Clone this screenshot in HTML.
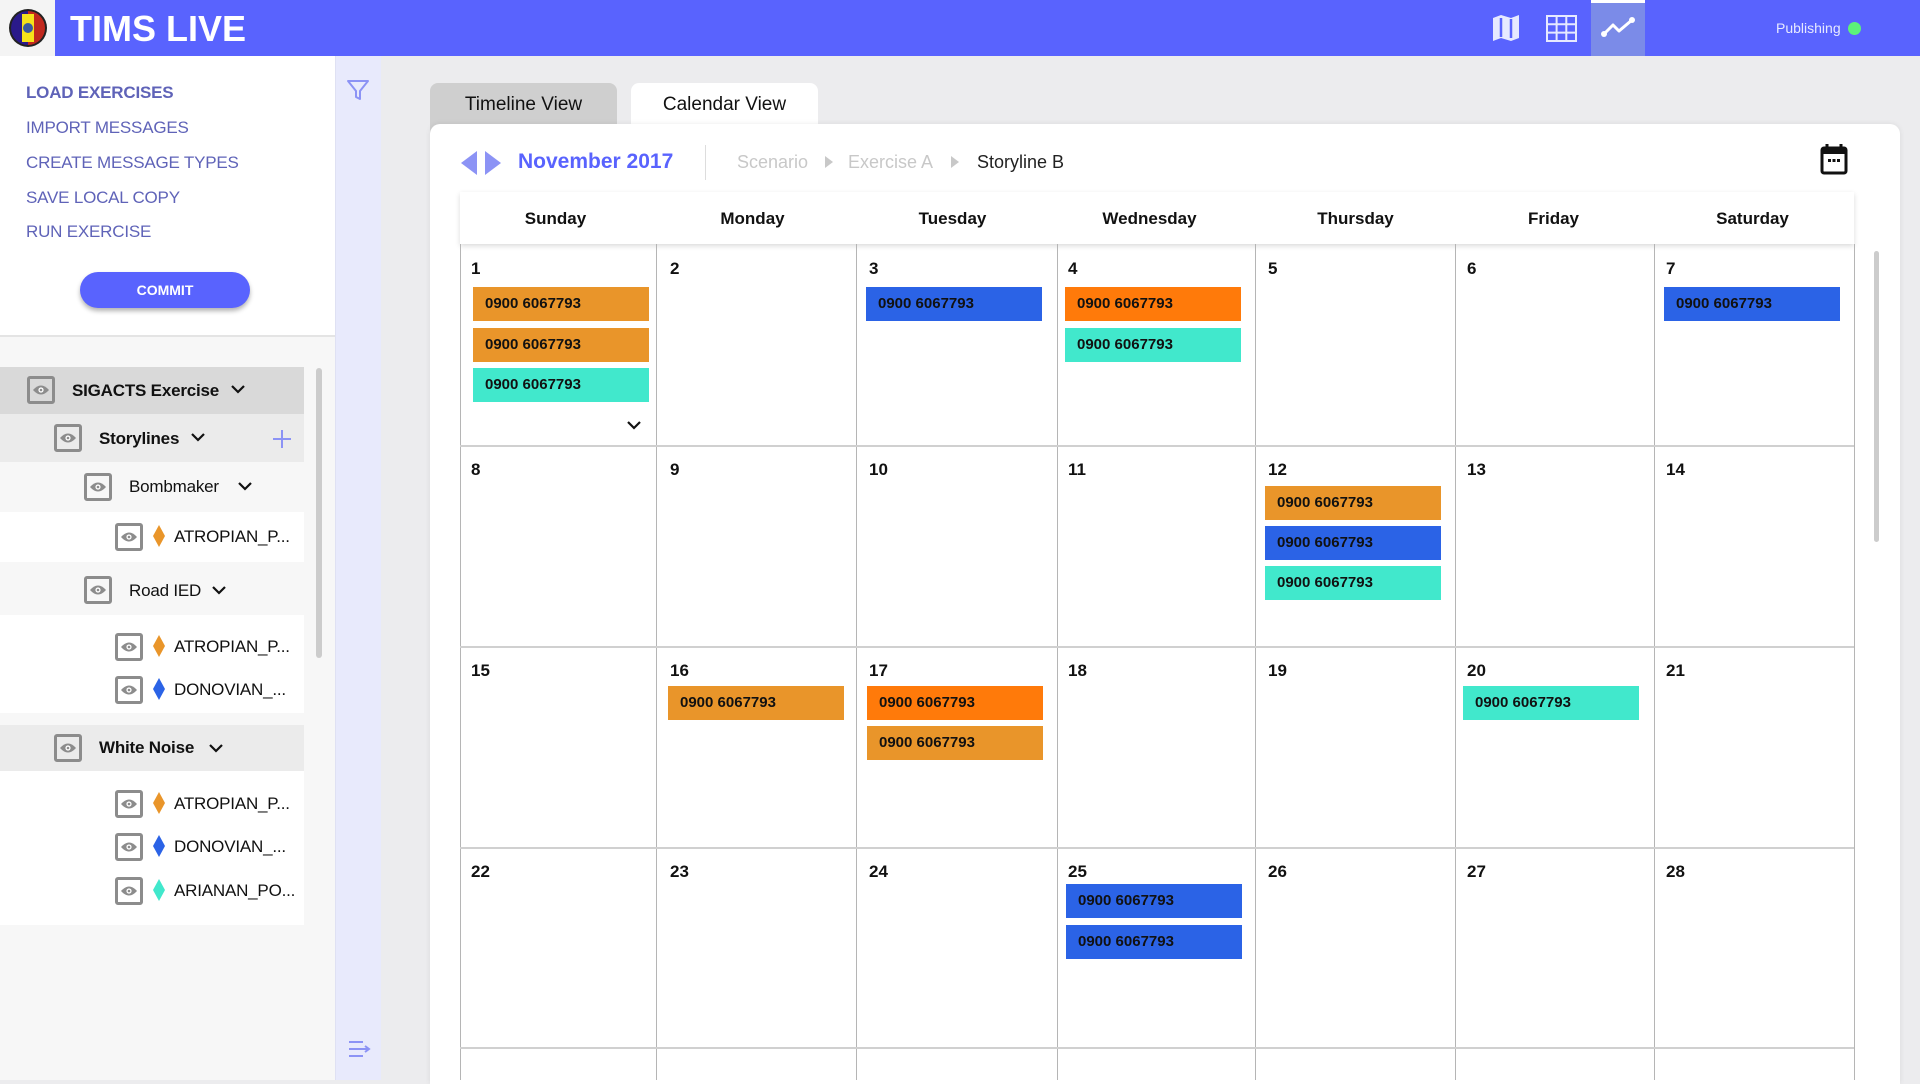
<!DOCTYPE html>
<html><head><meta charset="utf-8"><style>
*{margin:0;padding:0;box-sizing:border-box}
body{width:1920px;height:1080px;overflow:hidden;background:#ececee;font-family:"Liberation Sans",sans-serif;position:relative}
.a{position:absolute}
.hdr{left:0;top:0;width:1920px;height:56px;background:#5963fe}
.menu{left:26px;font-size:17px;color:#5f63b8;line-height:22px;letter-spacing:-0.2px}
.row{left:0;width:304px}
.eye{position:absolute;width:28px;height:28px;border:3px solid #8c8c8c;border-radius:3px}
.eye svg{position:absolute;left:2px;top:5px}
.lbl{position:absolute;font-size:17px;color:#111;line-height:22px;letter-spacing:-0.2px}
.dia{position:absolute;width:12px;height:22px}
.day{font-size:17px;font-weight:bold;line-height:22px;color:#111}
.dn{font-size:17px;font-weight:bold;color:#111;text-align:center;width:199px;top:208px;line-height:22px}
.ev{width:176px;height:34px;font-size:15px;font-weight:bold;color:#111;line-height:34px;padding-left:12px}
.o{background:#e9952a}.b{background:#2b63e6}.t{background:#41e8cc}.r{background:#ff7a0a}
.vl{width:1px;background:#b5b5b5;top:244px;height:836px}
.hl{height:2px;background:#d0d0d0;left:460px;width:1394px}
</style></head><body>
<div class="a hdr"></div>
<div class="a" style="left:0;top:0;width:55px;height:56px;background:#f4f4f4"></div>
<svg class="a" style="left:8px;top:8px" width="40" height="40" viewBox="0 0 40 40"><circle cx="20" cy="20" r="19" fill="#222"/><path d="M20 3 A17 17 0 0 0 20 37Z" fill="#2a1a8a"/><path d="M20 3 A17 17 0 0 1 20 37Z" fill="#c0281e"/><rect x="14" y="6" width="12" height="28" fill="#f5e21a"/><circle cx="20" cy="20" r="5" fill="#3a5aa0"/></svg>
<div class="a" style="left:70px;top:7px;font-size:36px;font-weight:bold;color:#fff;line-height:44px">TIMS LIVE</div>
<svg class="a" style="left:1492px;top:14px" width="28" height="28" viewBox="0 0 28 28"><path d="M1 4 L9 1 L19 4 L27 1 L27 24 L19 27 L9 24 L1 27Z" fill="#e6e9ff"/><path d="M9 4 L9 23 M19 5 L19 24" stroke="#5963fe" stroke-width="2.5"/></svg>
<svg class="a" style="left:1546px;top:15px" width="31" height="27" viewBox="0 0 31 27"><rect x="1" y="1" width="29" height="25" fill="none" stroke="#e6e9ff" stroke-width="2"/><path d="M1 9.3H30M1 17.6H30M10.6 1V26M20.3 1V26" stroke="#e6e9ff" stroke-width="2"/></svg>
<div class="a" style="left:1591px;top:0;width:54px;height:56px;background:#7b8be8;border-top:3px solid #fff"></div>
<svg class="a" style="left:1601px;top:16px" width="34" height="22" viewBox="0 0 34 22"><path d="M3 18 L12 9 L18 15 L31 4" fill="none" stroke="#fff" stroke-width="3" stroke-linecap="round" stroke-linejoin="round"/><circle cx="3" cy="18" r="3" fill="#fff"/><circle cx="31" cy="4" r="3" fill="#fff"/></svg>
<div class="a" style="left:1776px;top:20px;font-size:14px;color:#e6e9ff">Publishing</div>
<div class="a" style="left:1848px;top:22px;width:13px;height:13px;border-radius:50%;background:#5cf27a"></div>

<!-- sidebar -->
<div class="a" style="left:0;top:56px;width:335px;height:1024px;background:#f7f7f7"></div>
<div class="a" style="left:0;top:56px;width:335px;height:281px;background:#fff;border-bottom:2px solid #e4e4e4"></div>
<div class="a" style="left:335px;top:56px;width:46px;height:1024px;background:#e8eafc;border-left:1px solid #dfe1f3"></div>
<svg class="a" style="left:346px;top:78px" width="24" height="24" viewBox="0 0 24 24"><path d="M2 3 H22 L14 13 V21 L10 19 V13Z" fill="none" stroke="#8c93f5" stroke-width="2" stroke-linejoin="round"/></svg>
<svg class="a" style="left:348px;top:1040px" width="24" height="18" viewBox="0 0 24 18"><path d="M1 2H15M1 9H20M1 16H15" stroke="#8c93f5" stroke-width="2"/><path d="M17 6 L21 9 L17 12" fill="none" stroke="#8c93f5" stroke-width="2"/></svg>
<div class="a menu" style="top:82px;font-weight:bold">LOAD EXERCISES</div>
<div class="a menu" style="top:117px">IMPORT MESSAGES</div>
<div class="a menu" style="top:152px">CREATE MESSAGE TYPES</div>
<div class="a menu" style="top:187px">SAVE LOCAL COPY</div>
<div class="a menu" style="top:221px">RUN EXERCISE</div>
<div class="a" style="left:80px;top:272px;width:170px;height:36px;border-radius:18px;background:#5963fe;box-shadow:0 3px 5px rgba(0,0,0,.3);color:#fff;font-weight:bold;font-size:14px;text-align:center;line-height:36px">COMMIT</div>

<div class="a row" style="top:367px;height:47px;background:#d9d9d9"></div>
<div class="a row" style="top:414px;height:48px;background:#ebebeb"></div>
<div class="a row" style="top:512px;height:50px;background:#fff"></div>
<div class="a row" style="top:615px;height:98px;background:#fff"></div>
<div class="a row" style="top:725px;height:46px;background:#ebebeb"></div>
<div class="a row" style="top:771px;height:154px;background:#fff"></div>
<div class="a" style="left:316px;top:368px;width:6px;height:290px;border-radius:3px;background:#ccc"></div>

<div class="eye" style="left:27px;top:376px"><svg width="18" height="12" viewBox="0 0 18 12"><path d="M1 6 Q9 -3 17 6 Q9 15 1 6Z" fill="#8c8c8c"/><circle cx="9" cy="6" r="2.6" fill="#fff"/><circle cx="9" cy="6" r="1.3" fill="#8c8c8c"/></svg></div>
<div class="lbl" style="left:72px;top:380px;font-weight:bold">SIGACTS Exercise</div>
<svg class="a" style="left:231px;top:384px" width="14" height="10"><path d="M1 2 L7 8 L13 2" fill="none" stroke="#111" stroke-width="2.2"/></svg>

<div class="eye" style="left:54px;top:424px"><svg width="18" height="12" viewBox="0 0 18 12"><path d="M1 6 Q9 -3 17 6 Q9 15 1 6Z" fill="#8c8c8c"/><circle cx="9" cy="6" r="2.6" fill="#fff"/><circle cx="9" cy="6" r="1.3" fill="#8c8c8c"/></svg></div>
<div class="lbl" style="left:99px;top:428px;font-weight:bold">Storylines</div>
<svg class="a" style="left:191px;top:432px" width="14" height="10"><path d="M1 2 L7 8 L13 2" fill="none" stroke="#111" stroke-width="2.2"/></svg>
<svg class="a" style="left:272px;top:429px" width="20" height="20"><path d="M10 1V19M1 10H19" stroke="#8c93f5" stroke-width="2"/></svg>

<div class="eye" style="left:84px;top:473px"><svg width="18" height="12" viewBox="0 0 18 12"><path d="M1 6 Q9 -3 17 6 Q9 15 1 6Z" fill="#8c8c8c"/><circle cx="9" cy="6" r="2.6" fill="#fff"/><circle cx="9" cy="6" r="1.3" fill="#8c8c8c"/></svg></div>
<div class="lbl" style="left:129px;top:476px">Bombmaker</div>
<svg class="a" style="left:238px;top:481px" width="14" height="10"><path d="M1 2 L7 8 L13 2" fill="none" stroke="#111" stroke-width="2.2"/></svg>

<div class="eye" style="left:115px;top:523px"><svg width="18" height="12" viewBox="0 0 18 12"><path d="M1 6 Q9 -3 17 6 Q9 15 1 6Z" fill="#8c8c8c"/><circle cx="9" cy="6" r="2.6" fill="#fff"/><circle cx="9" cy="6" r="1.3" fill="#8c8c8c"/></svg></div>
<svg class="dia" style="left:153px;top:525px" viewBox="0 0 12 22"><path d="M6 0 L12 11 L6 22 L0 11Z" fill="#e9952a"/></svg>
<div class="lbl" style="left:174px;top:526px">ATROPIAN_P...</div>

<div class="eye" style="left:84px;top:576px"><svg width="18" height="12" viewBox="0 0 18 12"><path d="M1 6 Q9 -3 17 6 Q9 15 1 6Z" fill="#8c8c8c"/><circle cx="9" cy="6" r="2.6" fill="#fff"/><circle cx="9" cy="6" r="1.3" fill="#8c8c8c"/></svg></div>
<div class="lbl" style="left:129px;top:580px">Road IED</div>
<svg class="a" style="left:212px;top:585px" width="14" height="10"><path d="M1 2 L7 8 L13 2" fill="none" stroke="#111" stroke-width="2.2"/></svg>

<div class="eye" style="left:115px;top:633px"><svg width="18" height="12" viewBox="0 0 18 12"><path d="M1 6 Q9 -3 17 6 Q9 15 1 6Z" fill="#8c8c8c"/><circle cx="9" cy="6" r="2.6" fill="#fff"/><circle cx="9" cy="6" r="1.3" fill="#8c8c8c"/></svg></div>
<svg class="dia" style="left:153px;top:635px" viewBox="0 0 12 22"><path d="M6 0 L12 11 L6 22 L0 11Z" fill="#e9952a"/></svg>
<div class="lbl" style="left:174px;top:636px">ATROPIAN_P...</div>
<div class="eye" style="left:115px;top:676px"><svg width="18" height="12" viewBox="0 0 18 12"><path d="M1 6 Q9 -3 17 6 Q9 15 1 6Z" fill="#8c8c8c"/><circle cx="9" cy="6" r="2.6" fill="#fff"/><circle cx="9" cy="6" r="1.3" fill="#8c8c8c"/></svg></div>
<svg class="dia" style="left:153px;top:678px" viewBox="0 0 12 22"><path d="M6 0 L12 11 L6 22 L0 11Z" fill="#2b63e6"/></svg>
<div class="lbl" style="left:174px;top:679px">DONOVIAN_...</div>

<div class="eye" style="left:54px;top:734px"><svg width="18" height="12" viewBox="0 0 18 12"><path d="M1 6 Q9 -3 17 6 Q9 15 1 6Z" fill="#8c8c8c"/><circle cx="9" cy="6" r="2.6" fill="#fff"/><circle cx="9" cy="6" r="1.3" fill="#8c8c8c"/></svg></div>
<div class="lbl" style="left:99px;top:737px;font-weight:bold">White Noise</div>
<svg class="a" style="left:209px;top:743px" width="14" height="10"><path d="M1 2 L7 8 L13 2" fill="none" stroke="#111" stroke-width="2.2"/></svg>

<div class="eye" style="left:115px;top:790px"><svg width="18" height="12" viewBox="0 0 18 12"><path d="M1 6 Q9 -3 17 6 Q9 15 1 6Z" fill="#8c8c8c"/><circle cx="9" cy="6" r="2.6" fill="#fff"/><circle cx="9" cy="6" r="1.3" fill="#8c8c8c"/></svg></div>
<svg class="dia" style="left:153px;top:792px" viewBox="0 0 12 22"><path d="M6 0 L12 11 L6 22 L0 11Z" fill="#e9952a"/></svg>
<div class="lbl" style="left:174px;top:793px">ATROPIAN_P...</div>
<div class="eye" style="left:115px;top:833px"><svg width="18" height="12" viewBox="0 0 18 12"><path d="M1 6 Q9 -3 17 6 Q9 15 1 6Z" fill="#8c8c8c"/><circle cx="9" cy="6" r="2.6" fill="#fff"/><circle cx="9" cy="6" r="1.3" fill="#8c8c8c"/></svg></div>
<svg class="dia" style="left:153px;top:835px" viewBox="0 0 12 22"><path d="M6 0 L12 11 L6 22 L0 11Z" fill="#2b63e6"/></svg>
<div class="lbl" style="left:174px;top:836px">DONOVIAN_...</div>
<div class="eye" style="left:115px;top:877px"><svg width="18" height="12" viewBox="0 0 18 12"><path d="M1 6 Q9 -3 17 6 Q9 15 1 6Z" fill="#8c8c8c"/><circle cx="9" cy="6" r="2.6" fill="#fff"/><circle cx="9" cy="6" r="1.3" fill="#8c8c8c"/></svg></div>
<svg class="dia" style="left:153px;top:879px" viewBox="0 0 12 22"><path d="M6 0 L12 11 L6 22 L0 11Z" fill="#41e8cc"/></svg>
<div class="lbl" style="left:174px;top:880px">ARIANAN_PO...</div>

<!-- main -->
<div class="a" style="left:430px;top:83px;width:187px;height:50px;background:#cfcfcf;border-radius:8px 8px 0 0;font-size:19px;color:#111;text-align:center;line-height:44px">Timeline View</div>
<div class="a" style="left:631px;top:83px;width:187px;height:50px;background:#fff;border-radius:8px 8px 0 0;font-size:19px;color:#111;text-align:center;line-height:44px">Calendar View</div>
<div class="a" style="left:430px;top:124px;width:1470px;height:960px;background:#fff;border-radius:10px 10px 0 0;box-shadow:0 0 6px rgba(0,0,0,.08)"></div>
<svg class="a" style="left:458px;top:150px" width="46" height="26" viewBox="0 0 46 26"><path d="M19 1 L19 25 L3 13Z" fill="#8c93f5"/><path d="M27 1 L27 25 L43 13Z" fill="#8c93f5"/></svg>
<div class="a" style="left:518px;top:149px;font-size:21px;font-weight:bold;color:#5963fe;line-height:26px">November 2017</div>
<div class="a" style="left:705px;top:145px;width:1px;height:35px;background:#ddd"></div>
<div class="a" style="left:737px;top:151px;font-size:18px;color:#c8c8c8;line-height:22px">Scenario</div>
<svg class="a" style="left:824px;top:155px" width="10" height="14"><path d="M1 1 L9 7 L1 13Z" fill="#c8c8c8"/></svg>
<div class="a" style="left:848px;top:151px;font-size:18px;color:#c8c8c8;line-height:22px">Exercise A</div>
<svg class="a" style="left:950px;top:155px" width="10" height="14"><path d="M1 1 L9 7 L1 13Z" fill="#c8c8c8"/></svg>
<div class="a" style="left:977px;top:151px;font-size:18px;color:#222;line-height:22px">Storyline B</div>
<svg class="a" style="left:1820px;top:143px" width="28" height="32" viewBox="0 0 28 32"><rect x="2" y="5" width="24" height="25" rx="2" fill="none" stroke="#111" stroke-width="3"/><rect x="2" y="5" width="24" height="6" fill="#111"/><path d="M7 1V6M21 1V6" stroke="#111" stroke-width="3"/><rect x="8" y="16" width="3" height="3" fill="#111"/><rect x="12.5" y="16" width="3" height="3" fill="#111"/><rect x="17" y="16" width="3" height="3" fill="#111"/></svg>

<div class="a" style="left:460px;top:192px;width:1394px;height:52px;background:#fff;box-shadow:0 2px 5px rgba(0,0,0,.15)"></div>
<div class="a dn" style="left:456px">Sunday</div>
<div class="a dn" style="left:653px">Monday</div>
<div class="a dn" style="left:853px">Tuesday</div>
<div class="a dn" style="left:1050px">Wednesday</div>
<div class="a dn" style="left:1256px">Thursday</div>
<div class="a dn" style="left:1454px">Friday</div>
<div class="a dn" style="left:1653px">Saturday</div>

<div class="a vl" style="left:460px"></div><div class="a vl" style="left:656px"></div><div class="a vl" style="left:856px"></div><div class="a vl" style="left:1057px"></div><div class="a vl" style="left:1255px"></div><div class="a vl" style="left:1455px"></div><div class="a vl" style="left:1654px"></div><div class="a vl" style="left:1854px"></div>
<div class="a hl" style="top:445px"></div><div class="a hl" style="top:646px"></div><div class="a hl" style="top:847px"></div><div class="a hl" style="top:1047px"></div>
<div class="a" style="left:1874px;top:251px;width:5px;height:291px;border-radius:3px;background:#ccc"></div>

<div class="a day" style="left:471px;top:258px">1</div><div class="a day" style="left:670px;top:258px">2</div><div class="a day" style="left:869px;top:258px">3</div><div class="a day" style="left:1068px;top:258px">4</div><div class="a day" style="left:1268px;top:258px">5</div><div class="a day" style="left:1467px;top:258px">6</div><div class="a day" style="left:1666px;top:258px">7</div>
<div class="a day" style="left:471px;top:459px">8</div><div class="a day" style="left:670px;top:459px">9</div><div class="a day" style="left:869px;top:459px">10</div><div class="a day" style="left:1068px;top:459px">11</div><div class="a day" style="left:1268px;top:459px">12</div><div class="a day" style="left:1467px;top:459px">13</div><div class="a day" style="left:1666px;top:459px">14</div>
<div class="a day" style="left:471px;top:660px">15</div><div class="a day" style="left:670px;top:660px">16</div><div class="a day" style="left:869px;top:660px">17</div><div class="a day" style="left:1068px;top:660px">18</div><div class="a day" style="left:1268px;top:660px">19</div><div class="a day" style="left:1467px;top:660px">20</div><div class="a day" style="left:1666px;top:660px">21</div>
<div class="a day" style="left:471px;top:861px">22</div><div class="a day" style="left:670px;top:861px">23</div><div class="a day" style="left:869px;top:861px">24</div><div class="a day" style="left:1068px;top:861px">25</div><div class="a day" style="left:1268px;top:861px">26</div><div class="a day" style="left:1467px;top:861px">27</div><div class="a day" style="left:1666px;top:861px">28</div>

<div class="a ev o" style="left:473px;top:287px">0900 6067793</div>
<div class="a ev o" style="left:473px;top:328px">0900 6067793</div>
<div class="a ev t" style="left:473px;top:368px">0900 6067793</div>
<svg class="a" style="left:626px;top:420px" width="16" height="11"><path d="M2 2 L8 8 L14 2" fill="none" stroke="#111" stroke-width="2.2"/></svg>
<div class="a ev b" style="left:866px;top:287px">0900 6067793</div>
<div class="a ev r" style="left:1065px;top:287px">0900 6067793</div>
<div class="a ev t" style="left:1065px;top:328px">0900 6067793</div>
<div class="a ev b" style="left:1664px;top:287px">0900 6067793</div>
<div class="a ev o" style="left:1265px;top:486px">0900 6067793</div>
<div class="a ev b" style="left:1265px;top:526px">0900 6067793</div>
<div class="a ev t" style="left:1265px;top:566px">0900 6067793</div>
<div class="a ev o" style="left:668px;top:686px">0900 6067793</div>
<div class="a ev r" style="left:867px;top:686px">0900 6067793</div>
<div class="a ev o" style="left:867px;top:726px">0900 6067793</div>
<div class="a ev t" style="left:1463px;top:686px">0900 6067793</div>
<div class="a ev b" style="left:1066px;top:884px">0900 6067793</div>
<div class="a ev b" style="left:1066px;top:925px">0900 6067793</div>
</body></html>
